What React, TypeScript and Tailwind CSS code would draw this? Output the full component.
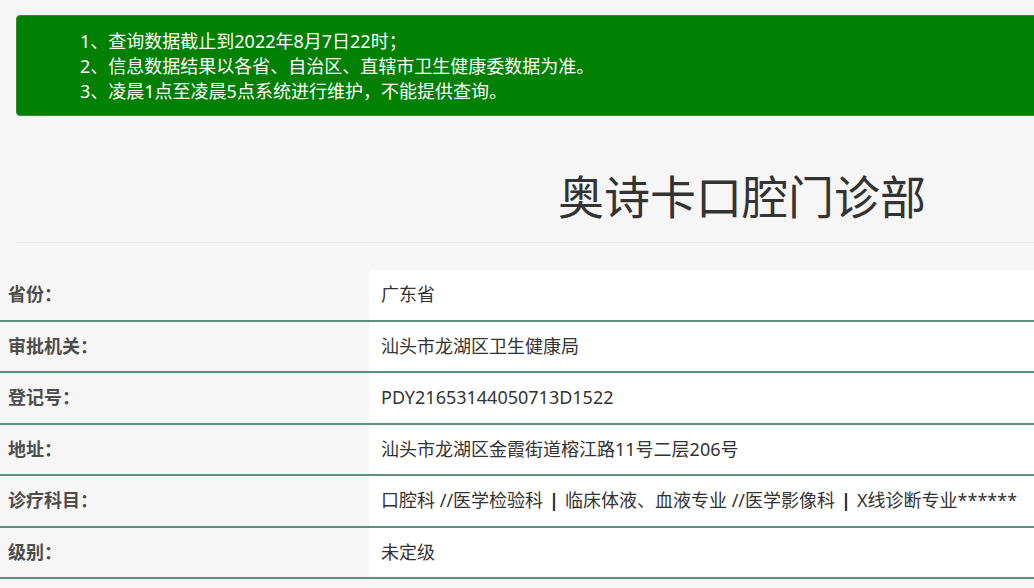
import React from "react";

const rows: [string, React.ReactNode][] = [
  ["省份：", "广东省"],
  ["审批机关：", "汕头市龙湖区卫生健康局"],
  ["登记号：", "PDY21653144050713D1522"],
  ["地址：", "汕头市龙湖区金霞街道榕江路11号二层206号"],
  [
    "诊疗科目：",
    <>
      口腔科 //医学检验科 <span className="mx-[6px] font-bold text-[#222]">|</span> 临床体液、血液专业 //医学影像科{" "}
      <span className="mx-[6px] font-bold text-[#222]">|</span> X线诊断专业******
    </>,
  ],
  ["级别：", "未定级"],
];

export default function App() {
  return (
    <div
      className="w-full min-h-screen overflow-hidden bg-[#f6f6f6]"
      style={{ fontFamily: '"Noto Sans", "Noto Sans CJK SC", sans-serif' }}
    >
      <div className="w-[1450px] pl-4 pt-[15px]">
        <div className="h-[101px] rounded-[4px] border border-[#2f8f2f] bg-[#008000] pl-[63px] pt-[13px] text-[18px] leading-[25px] text-white">
          <div>1、查询数据截止到2022年8月7日22时；</div>
          <div>2、信息数据结果以各省、自治区、直辖市卫生健康委数据为准。</div>
          <div>3、凌晨1点至凌晨5点系统进行维护，不能提供查询。</div>
        </div>
        <div className="mt-[50px] flex justify-center pl-[18px] text-[46px] leading-[60px] text-[#333]">
          奥诗卡口腔门诊部
        </div>
        <div className="mt-[16px] h-px bg-[#eaeaea]" />
      </div>
      <div className="mt-[27px] w-[1450px]">
        {rows.map(([label, value], i) => (
          <div key={i} className="flex h-[51.5px] border-b-2 border-[#5f8f7f]">
            <div className="flex w-[369px] shrink-0 items-center bg-[#f6f6f6] pl-[8px] text-[18px] font-bold text-[#4d4d4d]">
              {label}
            </div>
            <div className="flex flex-1 items-center whitespace-nowrap bg-white pl-[12px] text-[18px] text-[#333]">
              {value}
            </div>
          </div>
        ))}
      </div>
    </div>
  );
}
